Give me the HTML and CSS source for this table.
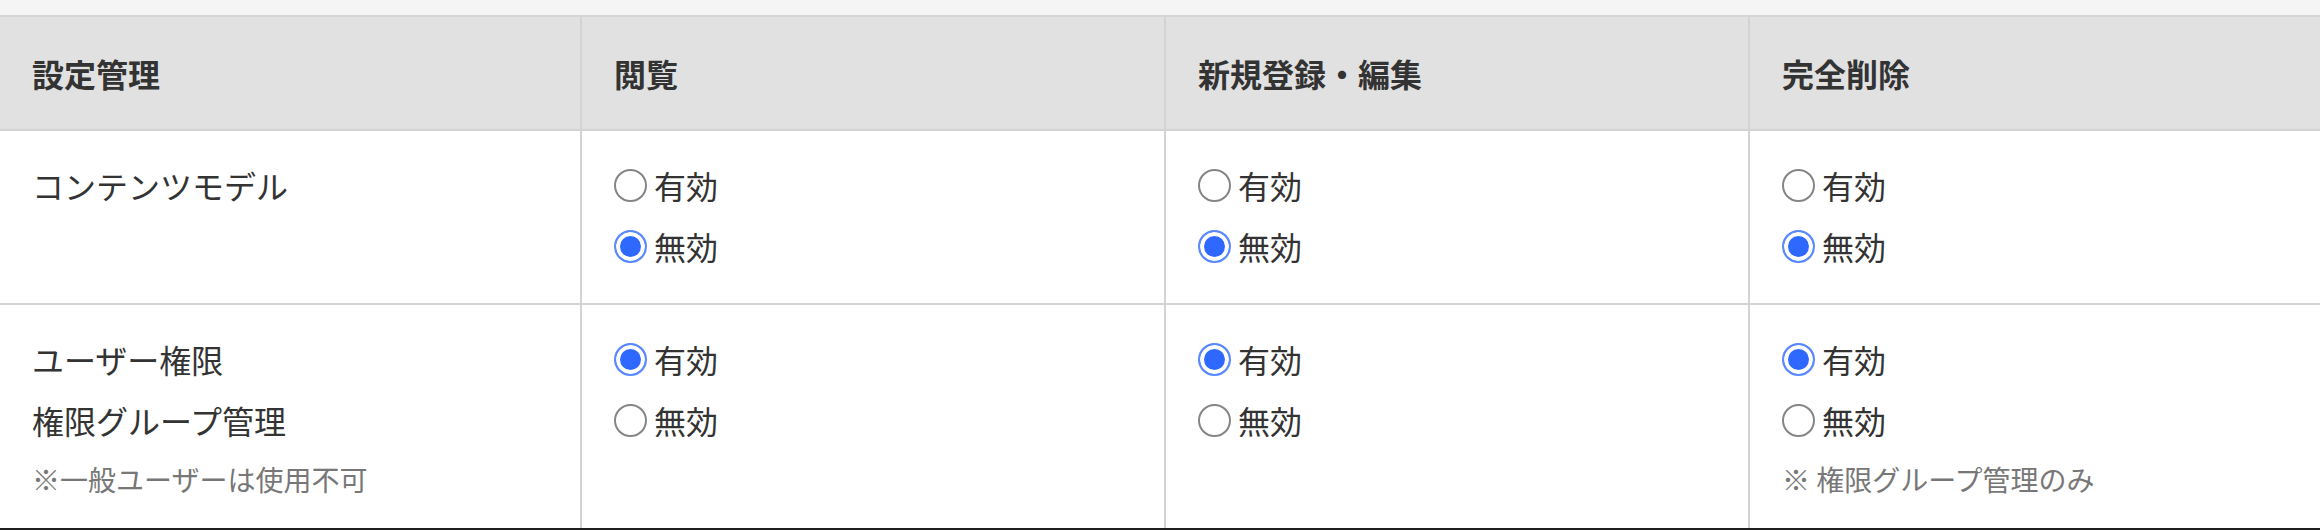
FILE: index.html
```html
<!DOCTYPE html>
<html lang="ja">
<head>
<meta charset="utf-8">
<title>権限設定</title>
<link rel="stylesheet" href="styles.css">
</head>
<body>
<div class="page">
  <div class="topbar"></div>
  <div class="perm-table" role="table">
    <div class="cell head first" role="columnheader">設定管理</div>
    <div class="cell head" role="columnheader">閲覧</div>
    <div class="cell head" role="columnheader">新規登録・編集</div>
    <div class="cell head" role="columnheader">完全削除</div>

    <div class="cell body first row1" role="cell">
      <div class="line">コンテンツモデル</div>
    </div>
    <div class="cell body row1" role="cell">
      <label class="line opt"><input type="radio" name="cm-view" class="radio"><span>有効</span></label>
      <label class="line opt"><input type="radio" name="cm-view" class="radio" checked><span>無効</span></label>
    </div>
    <div class="cell body row1" role="cell">
      <label class="line opt"><input type="radio" name="cm-edit" class="radio"><span>有効</span></label>
      <label class="line opt"><input type="radio" name="cm-edit" class="radio" checked><span>無効</span></label>
    </div>
    <div class="cell body row1" role="cell">
      <label class="line opt"><input type="radio" name="cm-del" class="radio"><span>有効</span></label>
      <label class="line opt"><input type="radio" name="cm-del" class="radio" checked><span>無効</span></label>
    </div>

    <div class="cell body first row2" role="cell">
      <div class="line">ユーザー権限</div>
      <div class="line">権限グループ管理</div>
      <div class="note">※一般ユーザーは使用不可</div>
    </div>
    <div class="cell body row2" role="cell">
      <label class="line opt"><input type="radio" name="ug-view" class="radio" checked><span>有効</span></label>
      <label class="line opt"><input type="radio" name="ug-view" class="radio"><span>無効</span></label>
    </div>
    <div class="cell body row2" role="cell">
      <label class="line opt"><input type="radio" name="ug-edit" class="radio" checked><span>有効</span></label>
      <label class="line opt"><input type="radio" name="ug-edit" class="radio"><span>無効</span></label>
    </div>
    <div class="cell body row2" role="cell">
      <label class="line opt"><input type="radio" name="ug-del" class="radio" checked><span>有効</span></label>
      <label class="line opt"><input type="radio" name="ug-del" class="radio"><span>無効</span></label>
      <div class="note">※ 権限グループ管理のみ</div>
    </div>
  </div>
</div>
</body>
</html>
```

FILE: styles.css
```css
* {
  box-sizing: border-box;
}

html, body {
  margin: 0;
  padding: 0;
  background: #ffffff;
}

body {
  font-family: "Noto Sans CJK JP", "Noto Sans", sans-serif;
  color: #333333;
}

.page {
  width: 2320px;
  height: 530px;
  overflow: hidden;
  border-bottom: 2px solid #1f1f1f;
  background: #ffffff;
}

.topbar {
  height: 17px;
  background: #f5f5f5;
  border-bottom: 2px solid #d5d5d5;
}

.perm-table {
  display: grid;
  grid-template-columns: 580px 584px 584px 572px;
}

.cell {
  border-bottom: 2px solid #d3d3d3;
  border-left: 2px solid #d3d3d3;
  padding: 0 32px;
}

.cell.first {
  border-left: none;
}

.head {
  height: 114px;
  background: #e1e1e1;
  display: flex;
  align-items: center;
  font-size: 32px;
  font-weight: 700;
  color: #333333;
}

.body {
  padding-top: 24px;
  padding-bottom: 24px;
  font-size: 32px;
}

.row1 {
  height: 174px;
}

.line {
  height: 61px;
  line-height: 61px;
  display: flex;
  align-items: center;
  white-space: nowrap;
}

.opt {
  cursor: pointer;
}

.radio {
  -webkit-appearance: none;
  appearance: none;
  width: 33px;
  height: 33px;
  margin: 0 7px 0 0;
  border-radius: 50%;
  border: 2px solid #858585;
  background: #ffffff;
  flex: none;
}

.radio:checked {
  border: 2px solid #5a88ff;
  background: #2f68ff;
  box-shadow: inset 0 0 0 4px #ffffff;
}

.note {
  height: 56px;
  line-height: 56px;
  font-size: 28px;
  color: #777777;
  white-space: nowrap;
}
```
